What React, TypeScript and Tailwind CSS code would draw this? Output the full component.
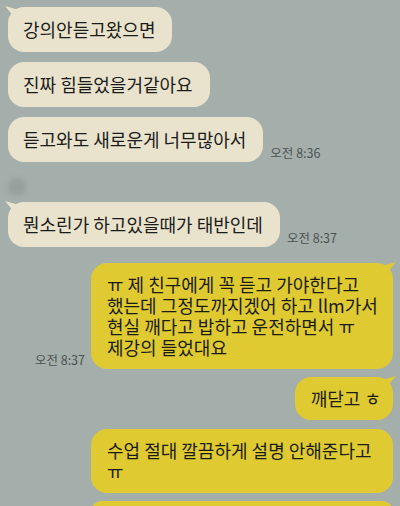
import React from "react";

const font = { fontFamily: '"Noto Sans CJK KR", "Noto Sans", sans-serif' };

function TailLeft({ color }: { color: string }) {
    return (
        <svg className="absolute -left-[3px] -top-[1px]" width="14" height="12" viewBox="0 0 14 12">
            <path d="M0 0 L14 4 L10 12 Z" fill={color} />
        </svg>
    );
}

function TailRight({ color }: { color: string }) {
    return (
        <svg className="absolute -right-[3px] -top-[1px]" width="14" height="12" viewBox="0 0 14 12">
            <path d="M14 0 L0 4 L4 12 Z" fill={color} />
        </svg>
    );
}

function Left({ text, time, tail }: { text: string; time?: string; tail?: boolean }) {
    return (
        <div className="flex items-end">
            <div className="relative rounded-[16px] bg-[#e9e3cd] pl-[15px] pr-[17px] py-[12px] text-[18px] leading-[21px] text-[#1b1b1a]">
                {tail && <TailLeft color="#e9e3cd" />}
                <span className="relative">{text}</span>
            </div>
            {time && <span className="ml-[7px] mb-[1px] text-[12.5px] leading-[16px] text-[#4d5352]">{time}</span>}
        </div>
    );
}

function Right({ lines, time, tail, wide }: { lines: string[]; time?: string; tail?: boolean; wide?: boolean }) {
    return (
        <div className="flex items-end justify-end">
            {time && <span className="mr-[6px] mb-[1px] text-[12.5px] leading-[16px] text-[#4d5352]">{time}</span>}
            <div
                className={
                    wide
                        ? "relative w-[302px] rounded-[16px] bg-[#dfca32] pl-[16px] pr-[14px] py-[11px] text-[18px] leading-[21px] text-[#1b1b1a]"
                        : "relative rounded-[16px] bg-[#dfca32] pl-[16px] pr-[12px] py-[11px] text-[18px] leading-[21px] text-[#1b1b1a]"
                }
            >
                {tail && <TailRight color="#dfca32" />}
                <div className="relative whitespace-nowrap">
                    {lines.map((l, i) => (
                        <div key={i}>{l}</div>
                    ))}
                </div>
            </div>
        </div>
    );
}

export default function App() {
    return (
        <div className="relative h-[506px] w-[400px] overflow-hidden bg-[#a4aeab]" style={font}>
            <div className="flex flex-col pl-[8px] pr-[7px] pt-[7px]">
                <Left text="강의안듣고왔으면" tail />
                <div className="mt-[10px]">
                    <Left text="진짜 힘들었을거같아요" />
                </div>
                <div className="mt-[10px]">
                    <Left text="듣고와도 새로운게 너무많아서" time="오전 8:36" />
                </div>
                <div className="mt-[16px] h-[18px] w-[18px] rounded-full bg-[#97a09d] blur-[2px]" />
                <div className="mt-[6px]">
                    <Left text="뭔소린가 하고있을때가 태반인데" time="오전 8:37" tail />
                </div>
                <div className="mt-[16px]">
                    <Right
                        lines={["ㅠ 제 친구에게 꼭 듣고 가야한다고", "했는데 그정도까지겠어 하고 llm가서", "현실 깨다고 밥하고 운전하면서 ㅠ", "제강의 들었대요"]}
                        time="오전 8:37"
                        tail
                        wide
                    />
                </div>
                <div className="mt-[8px]">
                    <Right lines={["깨닫고 ㅎ"]} tail />
                </div>
                <div className="mt-[9px]">
                    <Right lines={["수업 절대 깔끔하게 설명 안해준다고", "ㅠ"]} wide />
                </div>
                <div className="mt-[8px]">
                    <Right lines={[" ", " "]} wide />
                </div>
            </div>
        </div>
    );
}
